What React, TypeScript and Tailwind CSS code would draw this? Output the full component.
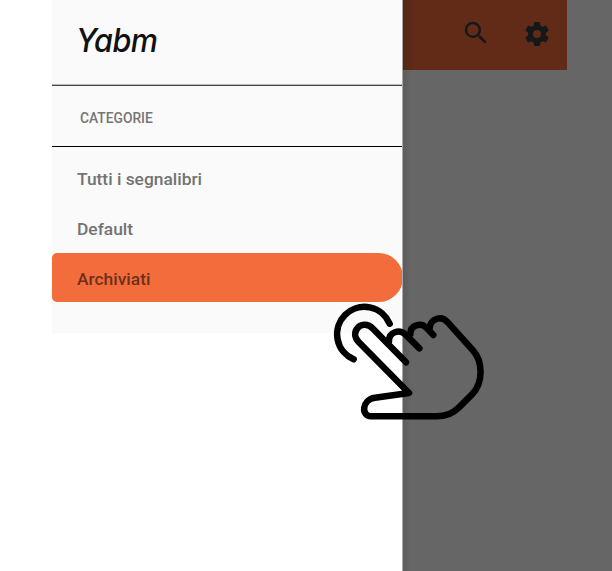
function HandPointer() {
  return (
    <svg className="absolute left-[320px] top-[240px]" width="180" height="190" viewBox="0 0 540 570" fill="none" stroke="#000" strokeWidth="19.5" strokeLinecap="round" strokeLinejoin="round">
      <path d="M101 358 A82 82 0 1 1 209 251" />
      <path d="M258 367 L159 266 C142 248 121 254 113 264 C102 276 103 292 116 306 L267 459 L165 473 C125 479 123 529 153 529 H350 Q390 529 417 502 L456 463 C490 429 490 365 458 330 L384 248 C362 223 331 238 329 264" />
      <path d="M207 304 C206 275 238 267 256 283 L298 325" />
      <path d="M271 282 C271 255 303 246 320 264 L340 285" />
    </svg>
  );
}

function Drawer() {
  return (
    <aside className="relative ml-[52px] h-[333px] w-[351px] shrink-0 bg-[#fafafa]">
      <header className="flex h-[84px] items-start pl-[24px] pt-[21px]">
        <h1 className="origin-left scale-x-[0.94] font-['Inter'] text-[32.5px] font-medium italic leading-[40px] tracking-[-0.6px] text-[#111] [font-feature-settings:'cv11']">Yabm</h1>
      </header>
      <div className="h-px bg-[#bbb]" />
      <div className="h-px bg-[#444]" />
      <h2 className="flex h-[60px] items-center pl-[28px] pt-[4px] text-[13.8px] font-medium text-[#757575]">CATEGORIE</h2>
      <div className="h-px bg-black" />
      <nav className="pt-[7px] text-[17.4px] font-medium text-[#737373]">
        <div className="flex h-[49px] items-center pl-[25px] pt-[2px]">Tutti i segnalibri</div>
        <div className="flex h-[50px] items-center pl-[25px] pt-[3px]">Default</div>
        <div className="flex h-[49px] items-center rounded-l-[5px] rounded-r-[25px] bg-[#f36d3c] pl-[25px] pt-[4px] text-[#6d301b]">Archiviati</div>
      </nav>
    </aside>
  );
}

export default function App() {
  return (
    <main className="relative flex h-[571px] w-[612px] overflow-hidden bg-white font-['Roboto',sans-serif]">
      <Drawer />
      <section className="relative h-full flex-1 bg-[#666] shadow-[-1px_0_0_#aaa]">
        <div className="flex h-[70px] w-[164px] bg-[linear-gradient(90deg,#552615_0,#622b18_12px)]">
          <svg className="ml-[58px] mt-[18px]" width="30" height="30" viewBox="0 0 24 24" fill="#151818">
            <path d="M15.5 14h-.79l-.28-.27A6.47 6.47 0 0 0 16 9.5 6.5 6.5 0 1 0 9.5 16c1.61 0 3.09-.59 4.23-1.57l.27.28v.79l5 4.99L20.49 19l-4.99-5zm-6 0C7.01 14 5 11.99 5 9.5S7.01 5 9.5 5 14 7.01 14 9.5 11.99 14 9.5 14z" />
          </svg>
          <svg className="ml-[31px] mt-[19px]" width="30" height="30" viewBox="0 0 24 24" fill="#151818">
            <path d="M19.14 12.94c.04-.3.06-.61.06-.94 0-.32-.02-.64-.07-.94l2.03-1.58a.49.49 0 0 0 .12-.61l-1.92-3.32a.49.49 0 0 0-.59-.22l-2.39.96c-.5-.38-1.03-.7-1.62-.94l-.36-2.54a.48.48 0 0 0-.48-.41h-3.84a.47.47 0 0 0-.47.41l-.36 2.54c-.59.24-1.13.57-1.62.94l-2.39-.96a.47.47 0 0 0-.59.22L2.74 8.87a.48.48 0 0 0 .12.61l2.03 1.58c-.05.3-.09.63-.09.94s.02.64.07.94l-2.03 1.58a.49.49 0 0 0-.12.61l1.92 3.32c.12.22.37.29.59.22l2.39-.96c.5.38 1.03.7 1.62.94l.36 2.54c.05.24.24.41.48.41h3.84c.24 0 .44-.17.47-.41l.36-2.54c.59-.24 1.13-.56 1.62-.94l2.39.96c.22.08.47 0 .59-.22l1.92-3.32a.47.47 0 0 0-.12-.61l-2.01-1.58zM12 15.2A3.2 3.2 0 1 1 12 8.8a3.2 3.2 0 0 1 0 6.4z" />
          </svg>
        </div>
        <div className="h-[501px] bg-[linear-gradient(90deg,#5d5d5d_0,#666_8px)]" />
      </section>
      <HandPointer />
    </main>
  );
}
